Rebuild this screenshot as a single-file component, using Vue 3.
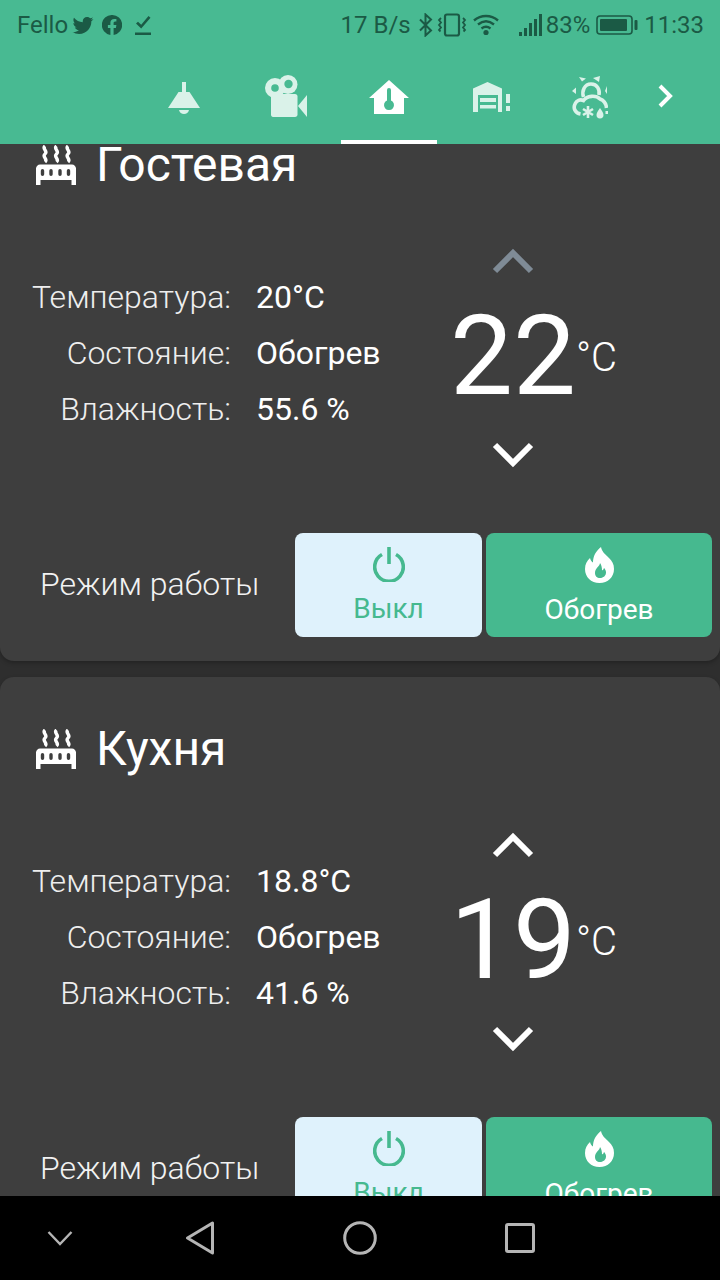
<template>
  <div class="screen">
    <header class="app-header">
      <div class="status-bar">
        <div class="status-left">
          <span class="carrier">Fello</span>
          <svg class="st-tw" viewBox="0 0 24 24"><path d="M22.46,6C21.69,6.35 20.86,6.58 20,6.69C20.88,6.16 21.56,5.32 21.88,4.31C21.05,4.81 20.13,5.16 19.16,5.36C18.37,4.5 17.26,4 16,4C13.65,4 11.73,5.92 11.73,8.29C11.73,8.63 11.77,8.96 11.84,9.27C8.28,9.09 5.11,7.38 3,4.79C2.63,5.42 2.42,6.16 2.42,6.94C2.42,8.43 3.17,9.75 4.33,10.5C3.62,10.5 2.96,10.3 2.38,10C2.38,10 2.38,10 2.38,10.03C2.38,12.11 3.86,13.85 5.82,14.24C5.46,14.34 5.08,14.39 4.69,14.39C4.42,14.39 4.15,14.36 3.89,14.31C4.43,16 6,17.26 7.89,17.29C6.43,18.45 4.58,19.13 2.56,19.13C2.22,19.13 1.88,19.11 1.54,19.07C3.44,20.29 5.7,21 8.12,21C16,21 20.33,14.46 20.33,8.79C20.33,8.6 20.33,8.42 20.32,8.23C21.16,7.63 21.88,6.87 22.46,6Z"/></svg>
          <svg class="st-fb" viewBox="0 0 20 20"><path fill-rule="evenodd" d="M10 0a10 10 0 0 0-1.600 19.900v-7H5.900V10h2.500V7.800c0-2.500 1.500-3.900 3.800-3.900 1.100 0 2.200.2 2.200.2v2.500h-1.200c-1.200 0-1.600.8-1.600 1.600V10h2.800l-.5 2.900h-2.300v7A10 10 0 0 0 10 0z"/></svg>
          <svg class="st-check" viewBox="0 0 18 20"><path d="M1 17.500h16V20H1z"/><path d="M2 8.500l2-1.800 3.200 3L14.500 1l2 1.800L7.200 13.500z"/></svg>
        </div>
        <div class="status-right">
          <span>17 B/s</span>
          <svg class="st-bt" viewBox="0 0 14 24"><path d="M1 6.500l11 11-5.500 5V1.500l5.500 5-11 11" fill="none" stroke-width="2"/></svg>
          <svg class="st-vib" viewBox="0 0 30 24"><rect x="8" y="1.500" width="14" height="21" rx="2" fill="none" stroke-width="2.200"/><path d="M4 5L2 7l2 2.500L2 12l2 2.500L2 17l1.500 1.500M26 5l2 2-2 2.500 2 2.500-2 2.500 2 2.500-1.500 1.500" fill="none" stroke-width="1.800"/></svg>
          <svg class="st-wifi" viewBox="0 0 26 22"><path d="M1 6.500C8 .5 18 .5 25 6.500M5 10.500c5-4 11-4 16 0M8.500 14.500c3-2.200 6-2.200 9 0" fill="none" stroke-width="2.400"/><circle cx="13" cy="18.500" r="2.600" stroke="none"/></svg>
          <svg class="st-signal" viewBox="0 0 24 24"><rect x="0" y="19" width="3" height="4" stroke="none"/><rect x="5" y="15" width="3" height="8" stroke="none"/><rect x="10" y="10" width="3" height="13" stroke="none"/><rect x="15" y="6" width="3" height="17" stroke="none"/><rect x="20" y="1" width="3" height="22" stroke="none"/></svg>
          <span class="pct">83%</span>
          <svg class="st-batt" viewBox="0 0 42 20"><rect x="1" y="1" width="35" height="18" rx="3" fill="none" stroke-width="1.600"/><rect x="4" y="4" width="27" height="12" rx="1" stroke="none"/><rect x="38.500" y="5" width="3" height="10" rx="1" stroke="none"/></svg>
          <span>11:33</span>
        </div>
      </div>
      <nav class="tabs">
        <div class="tab">
          <svg class="ico-lamp" viewBox="0 0 32 32"><path d="M14 0h4v10h-4z"/><path d="M10.500 10h11L32 26H0z"/><path d="M11 28h10c-.6 2.500-2.500 4-5 4s-4.400-1.500-5-4z"/></svg>
        </div>
        <div class="tab">
          <svg class="ico-cam" viewBox="0 0 42 42">
            <circle cx="10" cy="13" r="10"/><circle cx="23" cy="9.500" r="9.500"/>
            <path d="M6 19h24c1.500 0 2.500 1 2.500 2.500v18c0 1.500-1 2.500-2.500 2.500H8c-1.200 0-2-1-2-2.500z"/>
            <path d="M33 31l9-11v22z"/>
            <circle class="cam-hole" cx="10" cy="13" r="3.800"/><circle class="cam-hole" cx="23.500" cy="9" r="4.200"/>
          </svg>
        </div>
        <div class="tab active">
          <svg class="ico-home" viewBox="0 0 40 34"><path fill-rule="evenodd" d="M20 0l20 18h-5v16H5V18H0zM18 10v10.500a5 5 0 1 0 4 0V10a2 2 0 0 0-4 0z"/></svg>
          <span class="tab-line"></span>
        </div>
        <div class="tab">
          <svg class="ico-garage" viewBox="0 0 37 30"><path fill-rule="evenodd" d="M14.500 0L29 6.500V30h-4V13H5v17H0V6.500z"/><path d="M7 16h16v4H7zM7 23h16v3.500H7z"/><path d="M33 12h4v9h-4zM33 24h4v5h-4z"/></svg>
        </div>
        <div class="tab">
          <svg class="ico-weather" viewBox="0 0 36 46"><path d="M7 2l7 1.500-4 3zM21 3l7-2-1 6zM0 16l4-3.500V19zM35 11v8l-2-3z" stroke="none"/><path d="M11.500 22c-2-6 1-13 7.500-13s9 6 8 11" fill="none" stroke-width="3.600"/><path d="M8.500 39C3 38 1 33 3 29c1.500-3.500 5-5 8.500-3.500C15 20.500 24 20 28 24c3 1 6 3.500 6.500 9" fill="none" stroke-width="3.600"/><path d="M16 31v12M11 34l10 6M21 34l-10 6" fill="none" stroke-width="2.600"/><path d="M28 33c1.500 2.500 3.500 4.500 3.500 7a3.500 3.500 0 0 1-7 0c0-2.500 2-4.500 3.500-7z" stroke="none"/><rect x="33.500" y="36" width="2.500" height="3" stroke="none"/></svg>
        </div>
        <div class="tab chev">
          <svg class="ico-chev" viewBox="0 0 15 24"><path d="M2 2l10 10L2 22" fill="none" stroke="#fff" stroke-width="4"/></svg>
        </div>
      </nav>
    </header>

    <main class="content">
      <section v-for="room in rooms" :key="room.name" class="card">
        <div class="card-title">
          <svg class="ico-heat" viewBox="0 0 40 40"><path d="M9 1c-3.500 3 3.500 5 0 8s3.500 5 0 8M20.500 1c-3.500 3 3.500 5 0 8s3.500 5 0 8M32 1c-3.500 3 3.500 5 0 8s3.500 5 0 8" fill="none" stroke="#fff" stroke-width="3.400"/><path fill-rule="evenodd" fill="#fff" d="M4 19.500h32c2 0 4 2 4 4V40h-4.500v-5h-31v5H0V23.500c0-2 2-4 4-4zM6.500 24a1.700 1.700 0 0 0-1.700 1.700v3.600a1.700 1.700 0 0 0 3.400 0v-3.600A1.700 1.700 0 0 0 6.500 24zM15 24a1.700 1.700 0 0 0-1.700 1.700v3.600a1.700 1.700 0 0 0 3.400 0v-3.600A1.700 1.700 0 0 0 15 24zM24 24a1.700 1.700 0 0 0-1.700 1.700v3.600a1.700 1.700 0 0 0 3.400 0v-3.600A1.700 1.700 0 0 0 24 24zM32.500 24a1.700 1.700 0 0 0-1.700 1.700v3.600a1.700 1.700 0 0 0 3.400 0v-3.600a1.700 1.700 0 0 0-1.700-1.700z"/></svg>
          <h2>{{ room.name }}</h2>
        </div>

        <div class="climate">
          <dl class="readings">
            <div class="row"><dt>Температура:</dt><dd>{{ room.temp }}</dd></div>
            <div class="row"><dt>Состояние:</dt><dd>{{ room.state }}</dd></div>
            <div class="row"><dt>Влажность:</dt><dd>{{ room.humidity }}</dd></div>
          </dl>
          <div class="setpoint">
            <svg class="arrow" :class="{ dim: room.upDim }" viewBox="0 0 42 26"><path d="M3 23L21 5l18 18" fill="none" stroke="currentColor" stroke-width="6"/></svg>
            <div class="target"><span class="num">{{ room.target }}</span><span class="unit">°C</span></div>
            <svg class="arrow" viewBox="0 0 42 26"><path d="M3 3l18 18L39 3" fill="none" stroke="currentColor" stroke-width="6"/></svg>
          </div>
        </div>

        <div class="mode">
          <span class="mode-label">Режим работы</span>
          <button class="btn off">
            <svg class="ico-power" viewBox="0 0 32 35"><path d="M14.200 0h3.600v17h-3.600z" fill="#46b98f"/><path d="M9 7.500a14.300 14.300 0 1 0 14 0" fill="none" stroke="#46b98f" stroke-width="3.600"/></svg>
            <span>Выкл</span>
          </button>
          <button class="btn on">
            <svg class="ico-flame" viewBox="0 0 29 36"><path fill-rule="evenodd" fill="#fff" d="M16 0c1 5 4 7 8 11 3 3 5 6 5 11 0 8-6 14-14.500 14S0 30 0 22c0-5 2-8 5-11 .5 2 1.500 3.500 3 4.500C8 9 11 4 16 0zM15 16c0 3-5 5-5 10 0 3 2 5 5 5 3.500 0 6-2.500 6-5.500 0-2-1-3.500-2-4.500-.5 1.500-1 2-2 2.500 0-3-.5-5.500-2-7.500z"/></svg>
            <span>Обогрев</span>
          </button>
        </div>
      </section>
    </main>

    <footer class="nav-bar">
      <svg class="nv-down" viewBox="0 0 26 16"><path d="M1.500 2L13 14 24.500 2" fill="none" stroke="#b5b5b5" stroke-width="2.400"/></svg>
      <svg class="nv-back" viewBox="0 0 30 34"><path d="M27.500 2v30L2.500 17z" fill="none" stroke="#b5b5b5" stroke-width="3" stroke-linejoin="round"/></svg>
      <svg class="nv-home" viewBox="0 0 34 34"><circle cx="17" cy="17" r="15.300" fill="none" stroke="#b5b5b5" stroke-width="3"/></svg>
      <svg class="nv-recent" viewBox="0 0 30 30"><rect x="1.500" y="1.500" width="27" height="27" rx="1.500" fill="none" stroke="#b5b5b5" stroke-width="3"/></svg>
    </footer>
  </div>
</template>

<script setup>
const rooms = [
  { name: 'Гостевая', temp: '20°C', state: 'Обогрев', humidity: '55.6 %', target: 22, upDim: true },
  { name: 'Кухня', temp: '18.8°C', state: 'Обогрев', humidity: '41.6 %', target: 19, upDim: false }
]
</script>

<style>
html, body { margin: 0; background: #000; }
</style>

<style scoped>
.screen { width: 720px; height: 1280px; display: flex; flex-direction: column; overflow: hidden; font-family: Roboto, "Liberation Sans", sans-serif; background: #2e2e2e; color: #fff; }

.app-header { height: 144px; flex: none; background: #48ba92; position: relative; z-index: 2; }
.status-bar { height: 48px; display: flex; justify-content: space-between; align-items: center; padding: 2px 16px 0 17px; box-sizing: border-box; color: #1b5a45; font-size: 24px; fill: #1b5a45; stroke: #1b5a45; }
.status-left, .status-right { display: flex; align-items: center; }
.status-bar svg { display: block; flex: none; }
.status-left svg { stroke: none; }
.st-tw { width: 24px; height: 24px; margin-left: 3px; }
.st-fb { width: 20px; height: 20px; margin-left: 7px; }
.st-check { width: 18px; height: 20px; margin-left: 12px; }
.st-bt { width: 14px; height: 24px; margin-left: 8px; }
.st-vib { width: 30px; height: 24px; margin-left: 4px; }
.st-wifi { width: 26px; height: 22px; margin-left: 6px; }
.st-signal { width: 24px; height: 24px; margin-left: 20px; }
.pct { margin-left: 3px; }
.st-batt { width: 42px; height: 20px; margin-left: 6px; margin-right: 6px; }

.tabs { height: 96px; display: flex; padding-left: 134px; }
.tab { width: 102px; flex: none; position: relative; display: flex; align-items: center; justify-content: center; fill: #daf2e9; stroke: #daf2e9; }
.ico-lamp, .ico-cam, .ico-home, .ico-garage { stroke: none; }
.ico-lamp { width: 32px; height: 32px; margin-bottom: -4px; margin-left: -2px; }
.ico-cam { width: 42px; height: 42px; margin-top: -1px; margin-left: -2px; }
.cam-hole { fill: #48ba92; }
.ico-home { width: 40px; height: 34px; fill: #fff; margin-bottom: -1px; }
.ico-garage { width: 37px; height: 30px; margin-top: 2px; }
.ico-weather { width: 36px; height: 46px; margin-left: -6px; margin-top: 3px; }
.chev { width: 44px; margin-left: -1px; }
.ico-chev { width: 15px; height: 24px; }
.tab-line { position: absolute; left: 3px; right: 3px; bottom: 0; height: 4px; background: #fff; }

.content { flex: 1; min-height: 0; overflow: hidden; display: flex; flex-direction: column; gap: 16px; }
.card { flex: none; height: 568px; box-sizing: border-box; background: #3e3e3e; border-radius: 14px; box-shadow: 0 2px 4px rgba(0, 0, 0, .25); }
.card:first-child { margin-top: -51px; }

.card-title { height: 144px; display: flex; align-items: center; padding-left: 36px; box-sizing: border-box; }
.ico-heat { width: 40px; height: 40px; }
.card-title h2 { margin: 0 0 0 20px; font-size: 48px; font-weight: 400; line-height: 1; }

.climate { height: 296px; display: flex; }
.readings { margin: 0; width: 410px; flex: none; padding-top: 32px; }
.row { height: 56px; display: flex; align-items: center; font-size: 32px; }
.row dt { width: 231px; text-align: right; font-weight: 300; color: #eee; }
.row dd { margin: 0 0 0 25px; font-weight: 400; }

.setpoint { display: flex; flex-direction: column; align-items: center; width: 206px; flex: none; }
.arrow { width: 42px; height: 26px; color: #fff; flex: none; }
.arrow.dim { color: #7f8b96; }
.setpoint .arrow:first-child { margin-top: 11px; }
.target { height: 168px; box-sizing: border-box; padding-bottom: 5px; display: flex; align-items: center; }
.num { font-size: 112px; font-weight: 400; line-height: 1; }
.unit { font-size: 40px; font-weight: 300; margin-right: -44px; margin-top: 4px; width: 44px; }

.mode { height: 104px; display: flex; align-items: center; }
.mode-label { width: 295px; flex: none; box-sizing: border-box; padding: 0 0 2px 40px; font-size: 32px; font-weight: 300; color: #f2f2f2; }
.btn { border: none; height: 104px; border-radius: 8px; padding: 0; display: flex; flex-direction: column; align-items: center; font-family: inherit; font-size: 28px; }
.btn span { margin-top: 11px; line-height: 32px; }
.btn.off { width: 187px; background: #dff2fc; color: #46b98f; }
.btn.on { width: 226px; margin-left: 4px; background: #46b98f; color: #fff; }
.ico-power { width: 32px; height: 35px; margin-top: 14px; }
.ico-flame { width: 29px; height: 36px; margin-top: 14px; }

.nav-bar { height: 84px; flex: none; background: #000; position: relative; z-index: 2; display: flex; align-items: center; }
.nv-down { width: 26px; height: 16px; margin-left: 47px; margin-top: -1px; }
.nv-back { width: 30px; height: 34px; margin-left: 112px; }
.nv-home { width: 34px; height: 34px; margin-left: 128px; }
.nv-recent { width: 30px; height: 30px; margin-left: 128px; }
</style>
